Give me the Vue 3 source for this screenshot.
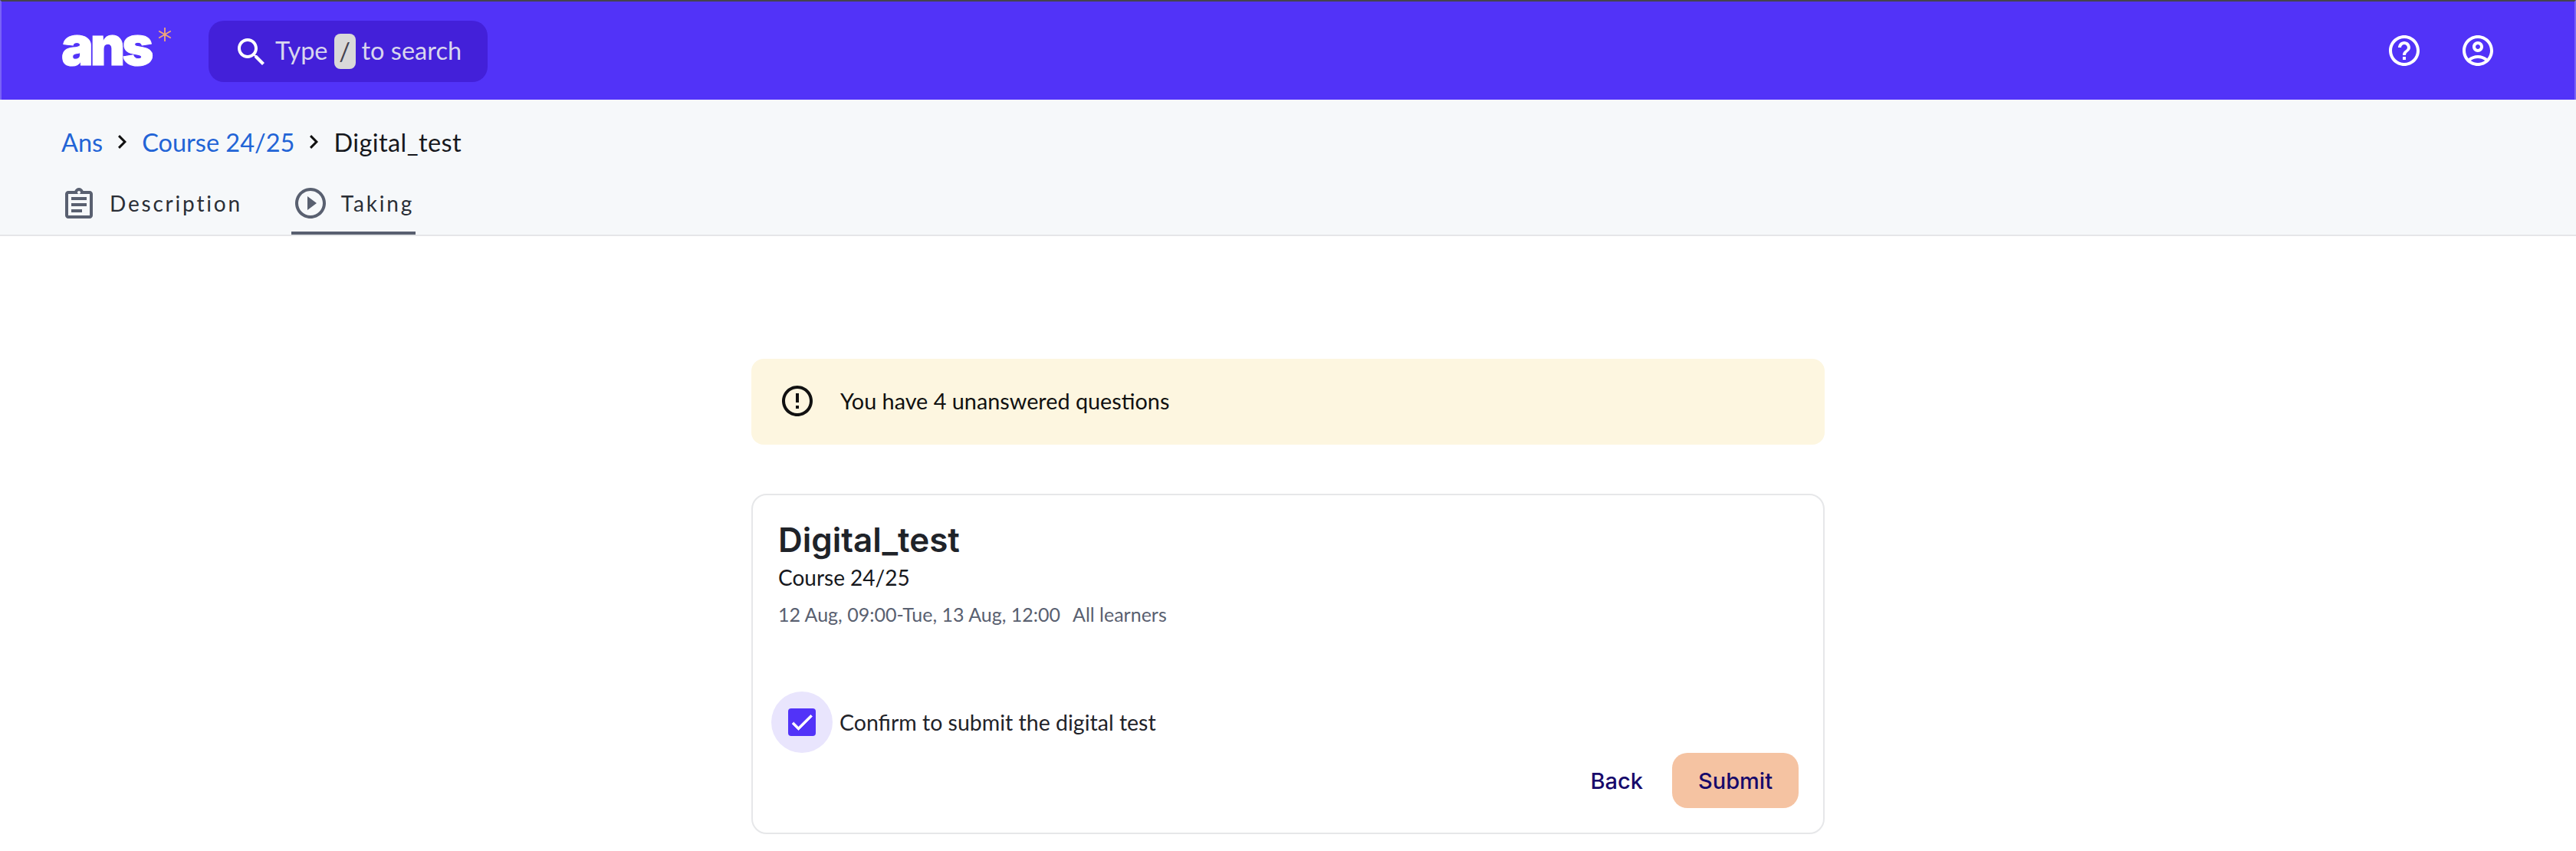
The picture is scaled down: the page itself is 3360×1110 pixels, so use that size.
<script setup>
const crumbs = [
  { label: 'Ans', link: true },
  { label: 'Course 24/25', link: true },
  { label: 'Digital_test', link: false },
]
</script>

<template>
  <div class="page">
    <header class="topbar">
      <div class="logo">
        <span class="logo-word">ans</span>
        <svg class="logo-star" viewBox="0 0 20 20" fill="none" stroke="#f0a878" stroke-width="1.800">
          <path d="M10 1v18M2.200 5.500l15.600 9M17.800 5.500l-15.600 9" />
        </svg>
      </div>
      <div class="search">
        <svg class="search-icon" viewBox="3 3 17.500 17.500" fill="#fff">
          <path d="M15.500 14h-.79l-.28-.27C15.410 12.590 16 11.110 16 9.500 16 5.910 13.090 3 9.500 3S3 5.910 3 9.500 5.910 16 9.500 16c1.610 0 3.090-.59 4.230-1.570l.27.28v.79l5 4.990L20.490 19l-4.990-5zm-6 0C7.010 14 5 11.990 5 9.500S7.010 5 9.500 5 14 7.010 14 9.500 11.990 14 9.500 14z" />
        </svg>
        <span>Type</span>
        <span class="slash">/</span>
        <span>to search</span>
      </div>
      <div class="top-icons">
        <svg viewBox="2 2 20 20" fill="#fff">
          <path d="M11 18h2v-2h-2v2zm1-16C6.480 2 2 6.480 2 12s4.480 10 10 10 10-4.480 10-10S17.520 2 12 2zm0 18c-4.410 0-8-3.590-8-8s3.590-8 8-8 8 3.590 8 8-3.590 8-8 8zm0-14c-2.210 0-4 1.790-4 4h2c0-1.100.9-2 2-2s2 .9 2 2c0 2-3 1.750-3 5h2c0-2.250 3-2.500 3-5 0-2.210-1.790-4-4-4z" />
        </svg>
        <svg viewBox="2 2 20 20" fill="#fff">
          <path d="M12 2C6.480 2 2 6.480 2 12s4.480 10 10 10 10-4.480 10-10S17.520 2 12 2zM7.350 18.500C8.660 17.560 10.260 17 12 17s3.340.56 4.650 1.500c-1.310.94-2.910 1.500-4.650 1.500s-3.340-.56-4.650-1.500zm10.790-1.380C16.450 15.800 14.320 15 12 15s-4.450.8-6.140 2.120C4.700 15.730 4 13.950 4 12c0-4.420 3.580-8 8-8s8 3.580 8 8c0 1.950-.7 3.730-1.860 5.120z" />
          <path d="M12 6c-1.930 0-3.500 1.570-3.500 3.500S10.070 13 12 13s3.500-1.570 3.500-3.500S13.930 6 12 6zm0 5c-.83 0-1.500-.67-1.500-1.500S11.170 8 12 8s1.500.67 1.500 1.500S12.830 11 12 11z" />
        </svg>
      </div>
    </header>

    <section class="subbar">
      <nav class="crumbs">
        <template v-for="(c, i) in crumbs" :key="c.label">
          <span :class="c.link ? 'crumb-link' : 'crumb-current'">{{ c.label }}</span>
          <svg v-if="i < crumbs.length - 1" class="chev" viewBox="8.590 6 7.410 12" fill="#111">
            <path d="M10 6 8.590 7.410 13.170 12l-4.580 4.590L10 18l6-6z" />
          </svg>
        </template>
      </nav>
      <div class="tabs">
        <div class="tab">
          <svg class="tab-icon clip" viewBox="3 1 18 20" fill="#596070">
            <path d="M19 3h-4.180C14.400 1.840 13.300 1 12 1c-1.300 0-2.400.84-2.820 2H5c-1.100 0-2 .9-2 2v14c0 1.100.9 2 2 2h14c1.100 0 2-.9 2-2V5c0-1.100-.9-2-2-2zm-7 0c.55 0 1 .45 1 1s-.45 1-1 1-1-.45-1-1 .45-1 1-1zm7 16H5V5h14v14z" />
            <path d="M7 15h7v2H7zM7 11h10v2H7zM7 7h10v2H7z" />
          </svg>
          <span>Description</span>
        </div>
        <div class="tab active">
          <svg class="tab-icon play" viewBox="2 2 20 20" fill="#596070">
            <path d="M10 16.500l6-4.500-6-4.500v9zM12 2C6.480 2 2 6.480 2 12s4.480 10 10 10 10-4.480 10-10S17.520 2 12 2zm0 18c-4.410 0-8-3.590-8-8s3.590-8 8-8 8 3.590 8 8-3.590 8-8 8z" />
          </svg>
          <span>Taking</span>
        </div>
      </div>
    </section>

    <main class="content">
      <div class="alert">
        <svg class="alert-icon" viewBox="2 2 20 20" fill="#111">
          <path d="M11 15h2v2h-2zm0-8h2v6h-2zm.99-5C6.470 2 2 6.480 2 12s4.470 10 9.990 10C17.520 22 22 17.520 22 12S17.520 2 11.990 2zM12 20c-4.420 0-8-3.580-8-8s3.580-8 8-8 8 3.580 8 8-3.580 8-8 8z" />
        </svg>
        <span>You have 4 unanswered questions</span>
      </div>

      <div class="card">
        <h1>Digital_test</h1>
        <div class="course">Course 24/25</div>
        <div class="meta">
          <span>12 Aug, 09:00-Tue, 13 Aug, 12:00</span>
          <span>All learners</span>
        </div>
        <label class="confirm">
          <span class="halo">
            <span class="box">
              <svg viewBox="0 0 24 24" fill="#fff" stroke="#fff" stroke-width="0.500">
                <path d="M9 16.170 4.830 12l-1.420 1.410L9 19 21 7l-1.410-1.410z" />
              </svg>
            </span>
          </span>
          <span>Confirm to submit the digital test</span>
        </label>
        <div class="actions">
          <button class="btn back">Back</button>
          <button class="btn submit">Submit</button>
        </div>
      </div>
    </main>
  </div>
</template>

<style scoped>
.page {
  width: 3360px;
  height: 1110px;
  overflow: hidden;
  background: #fff;
  font-family: Lato, sans-serif;
  color: #16181d;
}
.topbar {
  height: 130px;
  box-sizing: border-box;
  border-top: 2px solid #45434f;
  border-left: 2px solid #7a62f6;
  border-right: 2px solid #7a62f6;
  background: #5233f8;
  display: flex;
  align-items: center;
  padding-left: 78px;
  padding-right: 106px;
}
.logo {
  width: 192px;
  height: 70px;
  display: flex;
  align-items: flex-start;
  position: relative;
}
.logo-word {
  font-family: Inter, sans-serif;
  font-weight: 900;
  font-size: 70px;
  line-height: 70px;
  letter-spacing: -4px;
  color: #fff;
  -webkit-text-stroke: 1px #fff;
  margin-top: -6px;
}
.logo-star {
  position: absolute;
  left: 125px;
  top: 4px;
  width: 20px;
  height: 20px;
}
.search {
  width: 364px;
  height: 80px;
  border-radius: 20px;
  background: #4320d9;
  display: flex;
  align-items: center;
  padding-left: 38px;
  box-sizing: border-box;
  color: #d8d6ee;
  font-size: 32.500px;
  line-height: 46px;
  margin-top: 2px;
}
.search > span:not(.slash) {
  margin-top: -2px;
}
.search-icon {
  width: 35px;
  height: 35px;
  margin-right: 14px;
}
.slash {
  width: 28px;
  height: 46px;
  border-radius: 8px;
  background: #d9d9d9;
  color: #45434f;
  display: flex;
  align-items: center;
  justify-content: center;
  margin: 0 8px;
}
.top-icons {
  margin-left: auto;
  display: flex;
  gap: 56px;
}
.top-icons svg {
  width: 40px;
  height: 40px;
}
.subbar {
  height: 178px;
  box-sizing: border-box;
  background: #f6f8fa;
  border-bottom: 2px solid #e5e6e8;
  padding: 0 80px;
  display: flex;
  flex-direction: column;
}
.crumbs {
  height: 110px;
  box-sizing: border-box;
  display: flex;
  align-items: center;
  font-size: 32.500px;
  gap: 20px;
}
.crumb-link {
  color: #2264d6;
}
.crumb-current {
  color: #16181d;
  letter-spacing: 0.400px;
}
.chev {
  width: 11px;
  height: 18px;
}
.tabs {
  display: flex;
  gap: 62px;
  height: 66px;
}
.tab {
  display: flex;
  align-items: center;
  font-size: 28px;
  letter-spacing: 2.800px;
  color: #2a2e36;
  height: 66px;
  box-sizing: border-box;
  padding-bottom: 16px;
  padding-left: 5px;
  padding-right: 2px;
}
.tab-icon {
  margin-right: 22px;
}
.clip {
  width: 36px;
  height: 40px;
}
.play {
  width: 40px;
  height: 40px;
  margin-right: 20px;
}
.tab.active {
  border-bottom: 4px solid #596070;
  padding-bottom: 12px;
}
.content {
  width: 1400px;
  margin: 160px auto 0;
}
.alert {
  height: 112px;
  box-sizing: border-box;
  background: #fdf6e0;
  border-radius: 16px;
  display: flex;
  align-items: center;
  padding-left: 40px;
  padding-bottom: 2px;
  font-size: 28.800px;
  color: #111;
}
.alert-icon {
  width: 40px;
  height: 40px;
  margin-right: 36px;
}
.card {
  margin-top: 64px;
  height: 444px;
  box-sizing: border-box;
  border: 2px solid #e6e7e9;
  border-radius: 20px;
  padding: 30px 32px 0 33px;
  display: flex;
  flex-direction: column;
}
h1 {
  margin: 0;
  font-family: Inter, sans-serif;
  font-weight: 600;
  font-size: 44px;
  line-height: 56px;
  color: #1f2329;
}
.course {
  font-size: 28px;
  line-height: 40px;
  color: #16181d;
  margin-top: 1px;
}
.meta {
  display: flex;
  gap: 16px;
  font-size: 25px;
  line-height: 34px;
  color: #596070;
  margin-top: 11px;
}
.confirm {
  display: flex;
  align-items: center;
  gap: 9px;
  font-size: 28.500px;
  color: #1f2329;
  margin-top: 84px;
  margin-left: -9px;
  height: 80px;
  flex-shrink: 0;
}
.halo {
  width: 80px;
  height: 80px;
  border-radius: 50%;
  background: #e9e5fd;
  display: flex;
  align-items: center;
  justify-content: center;
}
.box {
  width: 36px;
  height: 36px;
  border-radius: 4px;
  background: #5233f8;
  display: flex;
}
.box svg {
  width: 36px;
  height: 36px;
}
.actions {
  display: flex;
  justify-content: flex-end;
  align-items: center;
  gap: 38px;
}
.btn {
  border: 0;
  background: none;
  font-family: Inter, sans-serif;
  font-weight: 500;
  font-size: 29px;
  color: #170a6b;
  padding: 0;
}
.submit {
  width: 165px;
  height: 72px;
  border-radius: 20px;
  background: #f5c3a2;
}
</style>

<style>
html, body {
  margin: 0;
  overflow: hidden;
}
</style>
